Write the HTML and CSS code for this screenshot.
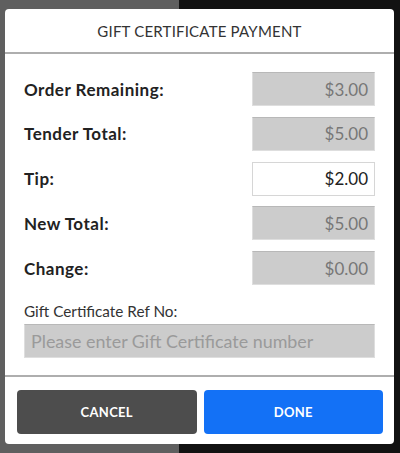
FILE: index.html
```html
<!DOCTYPE html>
<html>
<head>
<meta charset="utf-8">
<link rel="stylesheet" href="styles.css">
</head>
<body>
<div class="backdrop">
  <div class="dialog">
    <div class="dialog-header">GIFT CERTIFICATE PAYMENT</div>
    <div class="dialog-body">
      <div class="row">
        <span class="label">Order Remaining:</span>
        <div class="value disabled">$3.00</div>
      </div>
      <div class="row">
        <span class="label">Tender Total:</span>
        <div class="value disabled">$5.00</div>
      </div>
      <div class="row">
        <span class="label">Tip:</span>
        <div class="value editable">$2.00</div>
      </div>
      <div class="row">
        <span class="label">New Total:</span>
        <div class="value disabled">$5.00</div>
      </div>
      <div class="row">
        <span class="label">Change:</span>
        <div class="value disabled">$0.00</div>
      </div>
      <div class="ref">
        <div class="ref-label">Gift Certificate Ref No:</div>
        <div class="ref-input">Please enter Gift Certificate number</div>
      </div>
    </div>
    <div class="dialog-footer">
      <button class="btn btn-cancel">CANCEL</button>
      <button class="btn btn-done">DONE</button>
    </div>
  </div>
</div>
</body>
</html>
```

FILE: styles.css
```css
html, body {
  margin: 0;
  padding: 0;
}
body {
  width: 400px;
  height: 453px;
  overflow: hidden;
  font-family: "Lato", "Liberation Sans", sans-serif;
  background: linear-gradient(to right, #5f5f5f 0, #5f5f5f 179px, #121212 179px, #121212 100%);
}
.backdrop {
  padding: 9px 6px 9px 5px;
}
.dialog {
  width: 389px;
  height: 435px;
  background: #fff;
  border-radius: 4px;
  display: flex;
  flex-direction: column;
  overflow: hidden;
}
.dialog-header {
  height: 45px;
  box-sizing: border-box;
  border-bottom: 2px solid #aeaeae;
  display: flex;
  align-items: center;
  justify-content: center;
  font-size: 15px;
  color: #333;
  letter-spacing: 0.2px;
  padding-top: 1px;
}
.dialog-body {
  padding: 18px 19px 0 19px;
  display: flex;
  flex-direction: column;
  gap: 10.75px;
  height: 323px;
  box-sizing: border-box;
  border-bottom: 2px solid #aeaeae;
}
.row {
  display: flex;
  align-items: center;
  justify-content: space-between;
  height: 34px;
}
.label {
  font-weight: 700;
  font-size: 17px;
  letter-spacing: 0.5px;
  color: #222;
}
.value {
  width: 123px;
  height: 34px;
  box-sizing: border-box;
  display: flex;
  align-items: center;
  justify-content: flex-end;
  padding-right: 6px;
  font-size: 17px;
}
.value.disabled {
  background: #cccccc;
  color: #777;
  border-top: 1px solid #b8b8b8;
  border-left: 1px solid #dedede;
  border-right: 1px solid #dedede;
  border-bottom: 1px solid #dedede;
}
.value.editable {
  background: #fff;
  color: #222;
  border: 1px solid #d6d6d6;
}
.ref {
  margin-top: 6px;
  display: flex;
  flex-direction: column;
}
.ref-label {
  font-size: 15.3px;
  color: #333;
  line-height: 18px;
  margin-bottom: 4px;
}
.ref-input {
  height: 34px;
  box-sizing: border-box;
  background: #cccccc;
  border-top: 1px solid #b8b8b8;
  border-left: 1px solid #dedede;
  border-right: 1px solid #dedede;
  border-bottom: 1px solid #dedede;
  display: flex;
  align-items: center;
  padding-left: 6px;
  font-size: 17.9px;
  color: #9a9a9a;
}
.dialog-footer {
  flex: 1;
  display: flex;
  gap: 7px;
  padding: 13px 11px 10px 12px;
  box-sizing: border-box;
}
.btn {
  flex: 1;
  border: none;
  border-radius: 4px;
  color: #fff;
  font-family: "Lato", "Liberation Sans", sans-serif;
  font-weight: 700;
  font-size: 13px;
  letter-spacing: 0.3px;
  cursor: pointer;
}
.btn-cancel {
  background: #4d4d4d;
}
.btn-done {
  background: #1371f6;
}
```
